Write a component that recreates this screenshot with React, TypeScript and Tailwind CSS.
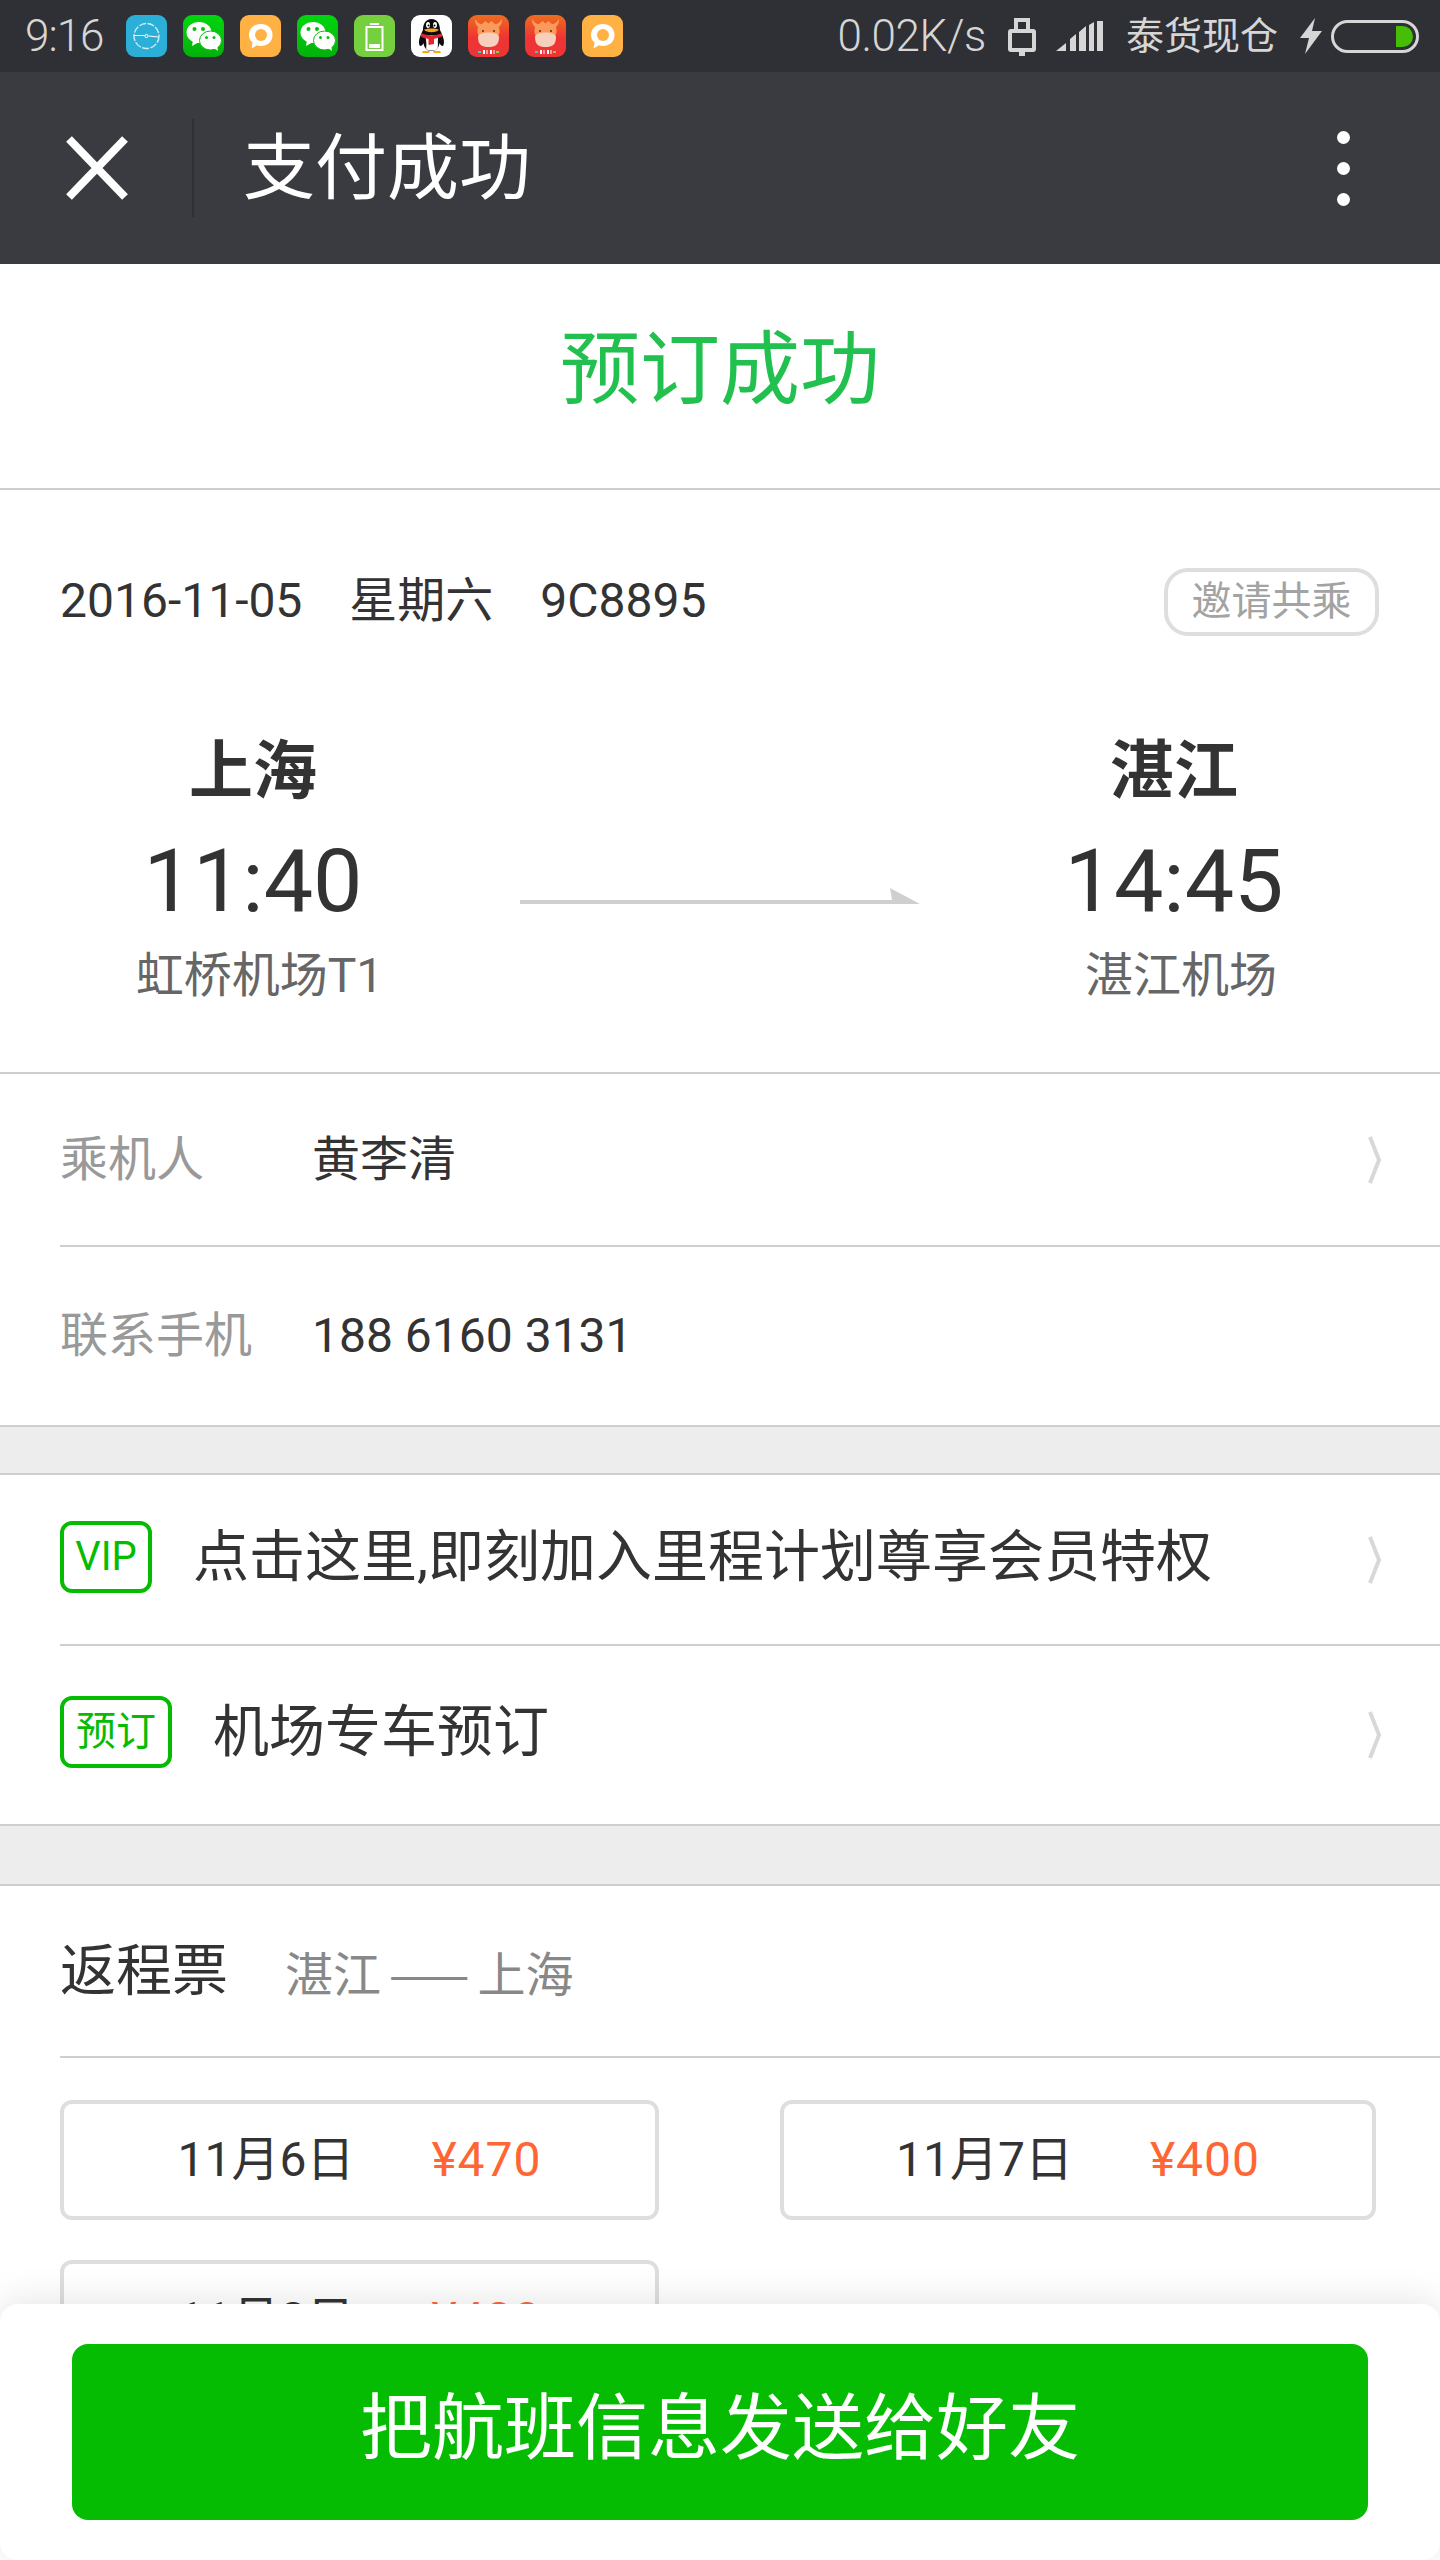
const font = '[font-family:Roboto,"Noto_Sans_CJK_SC",sans-serif]'

function ClockIcon() {
  return (
    <svg width="41" height="42" viewBox="0 0 41 42">
      <rect width="41" height="42" rx="9" fill="#2bafd6" />
      <circle cx="20.5" cy="21" r="12.5" fill="none" stroke="#cfeef8" strokeWidth="1.4" strokeDasharray="7 1.5" />
      <path d="M8 20.5 L18.5 20.5 M23 21 L32 22" stroke="#fff" strokeWidth="1" />
      <circle cx="20.5" cy="21" r="1.6" fill="none" stroke="#fff" strokeWidth="1" />
    </svg>
  )
}

function WechatIcon() {
  return (
    <svg width="41" height="42" viewBox="0 0 41 42">
      <defs>
        <linearGradient id="wx" x1="0" y1="0" x2="0" y2="1">
          <stop offset="0" stopColor="#00d60e" />
          <stop offset="1" stopColor="#04b00a" />
        </linearGradient>
      </defs>
      <rect width="41" height="42" rx="9" fill="url(#wx)" />
      <ellipse cx="16" cy="17.5" rx="12.5" ry="10.5" fill="#fff" />
      <path d="M10 25 L9 31 L16 27 Z" fill="#fff" />
      <ellipse cx="27.5" cy="25.5" rx="11" ry="9.5" fill="#fff" stroke="#0ac10f" strokeWidth="1" />
      <path d="M31 33 L35 36 L34 30 Z" fill="#fff" />
      <circle cx="11.5" cy="14" r="2" fill="#04c00c" />
      <circle cx="20" cy="14" r="2" fill="#04c00c" />
      <circle cx="23.5" cy="22.5" r="1.5" fill="#04c00c" />
      <circle cx="31" cy="22.5" r="1.5" fill="#04c00c" />
    </svg>
  )
}

function BubbleIcon() {
  return (
    <svg width="41" height="42" viewBox="0 0 41 42">
      <rect width="41" height="42" rx="9" fill="#ffb144" />
      <path d="M21 9 C28.5 9 32.5 14 32.5 20 C32.5 27 27 31 21 31 C19.5 31 18 30.8 17 30.3 L11.5 33.5 L12.6 27.5 C10.2 25.5 9 23 9 20 C9 14 13.5 9 21 9 Z" fill="#fff" />
      <circle cx="21" cy="20" r="6" fill="#ffb144" />
    </svg>
  )
}

function BatteryAppIcon() {
  return (
    <svg width="41" height="42" viewBox="0 0 41 42">
      <rect width="41" height="42" rx="9" fill="#76cf3f" />
      <rect x="16" y="8" width="9" height="2" fill="#fff" />
      <rect x="12.5" y="12" width="16" height="23" fill="none" stroke="#fff" strokeWidth="2" />
      <rect x="15" y="29" width="11" height="4" fill="#fff" />
    </svg>
  )
}

function QQIcon() {
  return (
    <svg width="41" height="42" viewBox="0 0 41 42">
      <rect width="41" height="42" rx="9" fill="#fff" />
      <path d="M20.5 4 C14.5 4 12 9 12 15 C9 21 6.5 27 9 31 C11 31 12 29 12.5 28 C13 32 15 36 20.5 36 C26 36 28 32 28.5 28 C29 29 30 31 32 31 C34.5 27 32 21 29 15 C29 9 26.5 4 20.5 4 Z" fill="#0c0c0c" />
      <path d="M14 20 C17 32 14 33 16 34.5 C18 36 24 36 26 34 C28 32 26 28 27.5 20 Z" fill="#fff" />
      <ellipse cx="17" cy="10" rx="2" ry="3" fill="#fff" />
      <ellipse cx="24" cy="10" rx="2" ry="3" fill="#fff" />
      <circle cx="17.5" cy="10.5" r="1" fill="#000" />
      <circle cx="23.5" cy="10.5" r="1" fill="#000" />
      <path d="M13 14.5 C17 13 24 13 28 14.5 C26 18 15 18 13 14.5 Z" fill="#f4a818" />
      <path d="M10 18 C16 21 25 21 31 18 L31 21.5 C27 23 24 23.5 23 24 L23 29 L17.5 30 L17.5 24 C15 23.5 12 23 10 21.5 Z" fill="#e8222a" />
      <path d="M12 36 L19 36 L18 38 L11 38 Z M22 36 L29 36 L30 38 L23 38 Z" fill="#f4a818" />
    </svg>
  )
}

function OxIcon() {
  return (
    <svg width="41" height="42" viewBox="0 0 41 42">
      <defs>
        <linearGradient id="ox" x1="0" y1="0" x2="0" y2="1">
          <stop offset="0" stopColor="#ee6d1f" />
          <stop offset="0.55" stopColor="#ee3434" />
        </linearGradient>
      </defs>
      <rect width="41" height="42" rx="9" fill="url(#ox)" />
      <path d="M7 4 C7 9 9 12 12 13 L29 13 C32 12 34 9 34 4 C32 7 30 9 27 9 L23.5 6 L20.5 8.5 L17.5 6 L14 9 C11 9 9 7 7 4 Z" fill="#fb9a5a" />
      <rect x="9.5" y="11" width="22" height="10" rx="4" fill="#fb9a5a" />
      <path d="M10 22 C10 16 31 16 31 22 C31 30 27 32 20.5 32 C14 32 10 30 10 22 Z" fill="#f6d0bd" />
      <circle cx="15" cy="16" r="0.9" fill="#40241c" />
      <circle cx="26" cy="16" r="0.9" fill="#40241c" />
      <path d="M15 35 H17 V39 H15 Z M18.5 35 H19.5 V39 H18.5 Z M22 35 H24 V39 H22 Z M25.5 35 H26.5 V39 H25.5 Z" fill="#fff" />
      <path d="M10 36 H13 V38 H10 Z" fill="#3fc7d9" />
      <path d="M28 36 H31 V38 H28 Z" fill="#8ad04a" />
    </svg>
  )
}

function StatusBar() {
  return (
    <div className="flex h-[72px] items-center bg-[#2f3035] pl-[25px] pr-[21px] text-[#d6d6d6]">
      <span className="w-[101px] text-[44px] leading-none font-light tracking-[-1px]">9:16</span>
      <div className="flex gap-[16px]">
        <ClockIcon />
        <WechatIcon />
        <BubbleIcon />
        <WechatIcon />
        <BatteryAppIcon />
        <QQIcon />
        <OxIcon />
        <OxIcon />
        <BubbleIcon />
      </div>
      <span className="ml-auto text-[44px] leading-none font-light tracking-[-0.4px]">0.02K/s</span>
      <svg className="ml-[22px]" width="28" height="39" viewBox="0 0 28 39">
        <path d="M8 14 V3 H20 V14" fill="none" stroke="#d6d6d6" strokeWidth="4" />
        <rect x="2" y="14" width="24" height="19" rx="1" fill="none" stroke="#d6d6d6" strokeWidth="4" />
        <rect x="11" y="33" width="6" height="6" fill="#d6d6d6" />
      </svg>
      <svg className="ml-[20px]" width="47" height="30" viewBox="0 0 47 30">
        <path d="M0 30 L10 22 V30 Z M14 30 V18 L20 13 V30 Z M23 30 V11 L30 5 V30 Z M33 30 V4 L38 1 V30 Z M41 30 V0 L47 0 V30 Z" fill="#d6d6d6" />
      </svg>
      <span className="ml-[23px] text-[38px] leading-none">泰货现仓</span>
      <svg className="ml-[22px]" width="22" height="36" viewBox="0 0 22 36">
        <path d="M15 0 L0 20 L9 20 L5 36 L22 13 L12 13 Z" fill="#d6d6d6" />
      </svg>
      <div className="ml-[9px] flex h-[33px] w-[88px] items-center justify-end rounded-full border-[3px] border-[#d6d6d6] pr-[3px]">
        <div className="h-[21px] w-[17px] rounded-r-full bg-[#46bd06]" />
      </div>
    </div>
  )
}

function NavBar() {
  return (
    <div className="flex h-[192px] items-center bg-[#3a3b40] text-white">
      <svg className="ml-[66px]" width="62" height="64" viewBox="0 0 62 64">
        <path d="M3 3 L59 61 M59 3 L3 61" stroke="#fff" strokeWidth="8" />
      </svg>
      <div className="ml-[64px] h-[98px] w-[2px] bg-[#2f3035]" />
      <span className="ml-[49px] pt-[2px] text-[72px] leading-none">支付成功</span>
      <div className="ml-auto mr-[90px] flex flex-col gap-[18px]">
        <div className="h-[13px] w-[13px] rounded-full bg-white" />
        <div className="h-[13px] w-[13px] rounded-full bg-white" />
        <div className="h-[13px] w-[13px] rounded-full bg-white" />
      </div>
    </div>
  )
}

function Chevron() {
  return (
    <svg width="14" height="48" viewBox="0 0 14 48">
      <path d="M2 1 L11 24 L2 47" fill="none" stroke="#d8d8d8" strokeWidth="4" />
    </svg>
  )
}

function CityColumn({ city, time, airport, shift }: { city: string; time: string; airport: string; shift: string }) {
  return (
    <div className="flex flex-col items-center">
      <div className="h-[80px] text-[64px] leading-[80px] font-bold text-[#333]">{city}</div>
      <div className="mt-[19px] h-[100px] text-[88px] leading-[100px] text-[#333]">{time}</div>
      <div className={`mt-[15px] h-[60px] text-[48px] leading-[60px] text-[#666] ${shift}`}>{airport}</div>
    </div>
  )
}

function FlightCard() {
  return (
    <section className="h-[584px] border-b-2 border-[#cfcfcf] bg-white pt-[78px]">
      <div className="flex h-[68px] items-center justify-between pl-[60px] pr-[61px]">
        <div className="flex gap-[47px] pb-[2px] text-[48px] leading-none text-[#333]">
          <span>2016-11-05</span>
          <span>星期六</span>
          <span>9C8895</span>
        </div>
        <div className="flex h-[68px] w-[215px] items-center justify-center rounded-[24px] border-[4px] border-[#dedede] text-[40px] leading-none text-[#a3a3a3]">
          邀请共乘
        </div>
      </div>
      <div className="mt-[96px] grid grid-cols-[320px_1fr_320px] pl-[93px] pr-[106px]">
        <CityColumn city="上海" time="11:40" airport="虹桥机场T1" shift="pl-[13px]" />
        <div className="ml-[107px] mt-[156px]">
          <svg width="400" height="16" viewBox="0 0 400 16">
            <path d="M0 12 H372 L370 0 L400 16 H0 Z" fill="#cfcfcf" />
          </svg>
        </div>
        <CityColumn city="湛江" time="14:45" airport="湛江机场" shift="pl-[14px]" />
      </div>
    </section>
  )
}

function PassengerRows() {
  return (
    <section className="bg-white pl-[60px]">
      <div className="flex h-[173px] items-center border-b-2 border-[#cfcfcf] pr-[58px] text-[48px] leading-none">
        <span className="w-[252px] text-[#999]">乘机人</span>
        <span className="text-[#333]">黄李清</span>
        <span className="ml-auto">
          <Chevron />
        </span>
      </div>
      <div className="flex h-[178px] items-center text-[48px] leading-none">
        <span className="w-[252px] text-[#999]">联系手机</span>
        <span className="text-[#333]">188 6160 3131</span>
      </div>
    </section>
  )
}

function Band({ height }: { height: string }) {
  return <div className={`border-y-2 border-[#cfcfcf] bg-[#ededed] ${height}`} />
}

function Badge({ label, width }: { label: string; width: string }) {
  return (
    <span className={`flex h-[72px] items-center justify-center rounded-[12px] border-[4px] border-[#06bc03] text-[40px] leading-none text-[#06bc03] ${width}`}>
      {label}
    </span>
  )
}

function ServiceRows() {
  return (
    <section className="bg-white pl-[60px]">
      <div className="flex h-[171px] items-center border-b-2 border-[#cfcfcf] pr-[58px] pb-[6px]">
        <Badge label="VIP" width="w-[92px]" />
        <span className="ml-[41px] text-[56px] leading-none text-[#333]">点击这里,即刻加入里程计划尊享会员特权</span>
        <span className="ml-auto mt-[6px]">
          <Chevron />
        </span>
      </div>
      <div className="flex h-[178px] items-center pr-[58px] pb-[6px]">
        <Badge label="预订" width="w-[112px]" />
        <span className="ml-[41px] text-[56px] leading-none text-[#333]">机场专车预订</span>
        <span className="ml-auto mt-[6px]">
          <Chevron />
        </span>
      </div>
    </section>
  )
}

function FareCard({ date, price }: { date: string; price: string }) {
  return (
    <div className="flex h-[120px] items-center justify-center gap-[77px] rounded-[12px] border-[4px] border-[#dedede] text-[48px] leading-none">
      <span className="text-[#333]">{date}</span>
      <span className="tracking-[1px] text-[#ff6633]">{price}</span>
    </div>
  )
}

function ReturnSection() {
  return (
    <section className="bg-white">
      <div className="ml-[60px] flex h-[172px] items-center border-b-2 border-[#cfcfcf]">
        <span className="text-[56px] leading-none text-[#333]">返程票</span>
        <span className='ml-[57px] flex gap-[8px] text-[48px] leading-none text-[#888] [font-family:"Noto_Sans_CJK_SC",sans-serif]'>
          <span>湛江</span>
          <span>——</span>
          <span>上海</span>
        </span>
      </div>
      <div className="mt-[42px] grid grid-cols-[599px_596px] gap-x-[121px] gap-y-[40px] pl-[60px]">
        <FareCard date="11月6日" price="¥470" />
        <FareCard date="11月7日" price="¥400" />
        <FareCard date="11月8日" price="¥420" />
      </div>
    </section>
  )
}

function ShareBar() {
  return (
    <div className="absolute inset-x-0 bottom-0 h-[256px] rounded-[18px] bg-white px-[72px] pt-[40px] shadow-[0_-4px_36px_rgba(0,0,0,0.1)]">
      <div className="flex h-[176px] items-center justify-center rounded-[16px] bg-[#06bc03] pb-[6px] text-[72px] leading-none text-white">
        把航班信息发送给好友
      </div>
    </div>
  )
}

export default function App() {
  return (
    <div className={`relative h-[2560px] w-[1440px] overflow-hidden bg-white ${font}`}>
      <StatusBar />
      <NavBar />
      <div className="flex h-[226px] items-center justify-center border-b-2 border-[#cfcfcf] bg-white pb-[12px] text-[80px] leading-none text-[#22c04f]">
        预订成功
      </div>
      <FlightCard />
      <PassengerRows />
      <Band height="h-[50px]" />
      <ServiceRows />
      <Band height="h-[62px]" />
      <ReturnSection />
      <ShareBar />
    </div>
  )
}
